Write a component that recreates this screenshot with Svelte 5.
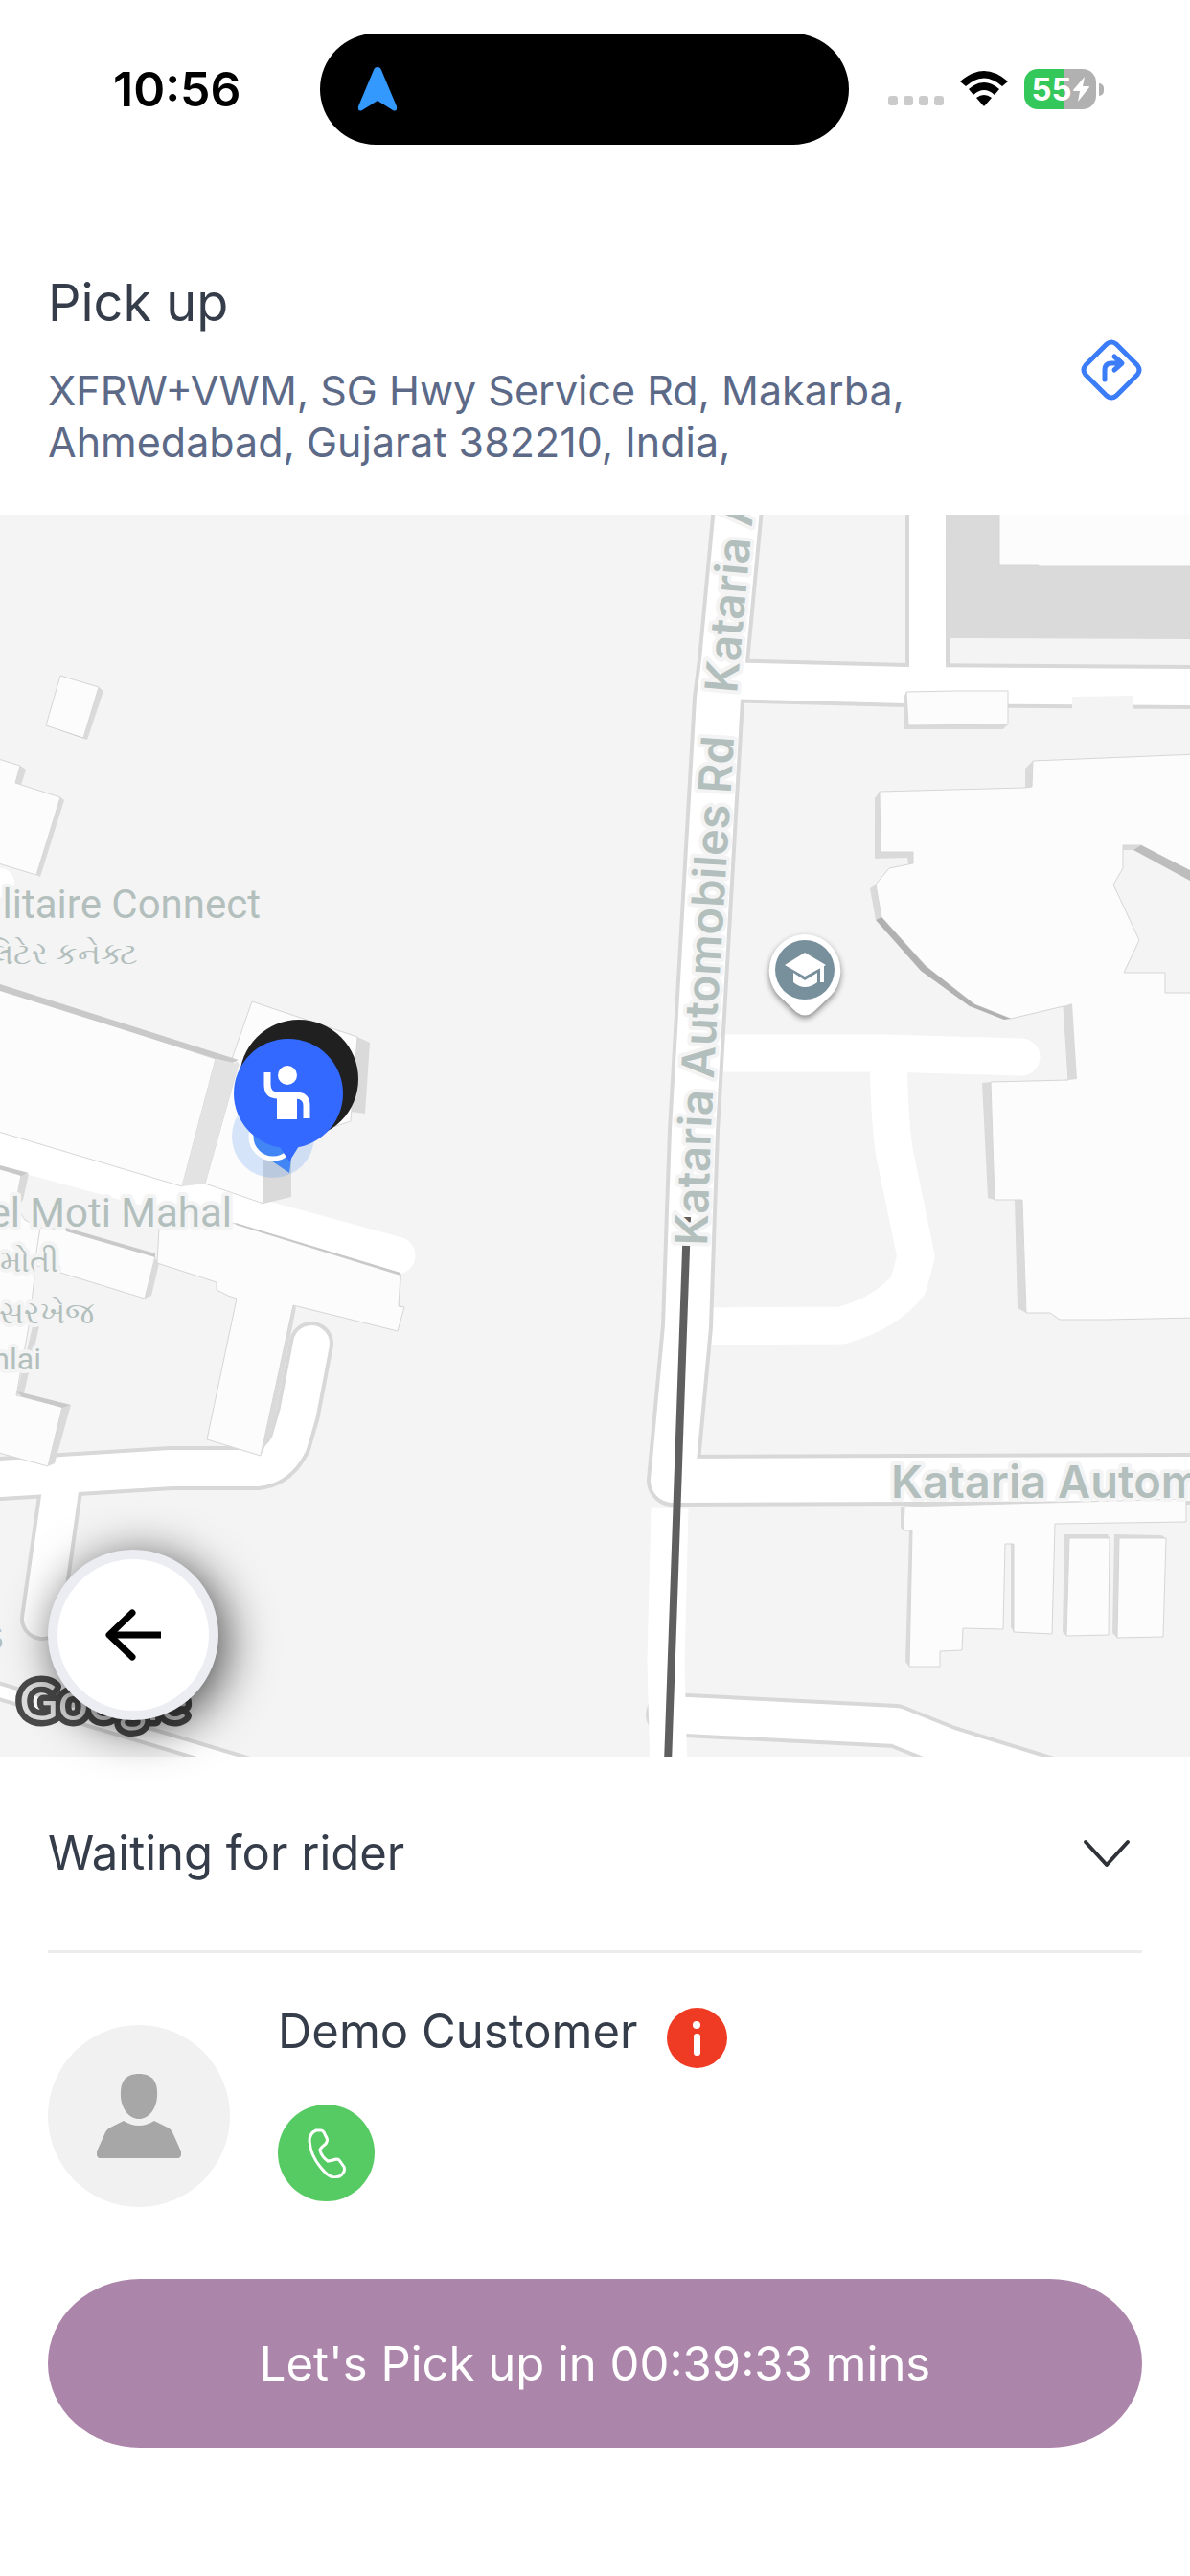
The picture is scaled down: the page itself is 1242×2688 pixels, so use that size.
<script lang="ts">
	const time = '10:56';
	const battery = 55;
	const rider = 'Demo Customer';
	const countdown = '00:39:33';

	// roads with a grey casing, drawn casing first so the junctions stay open
	const roads = [
		{ d: 'M770 530 L755 690 L750 729 L724 1180 L721 1264 L717 1384 L702 1545 L1260 1543', w: 54 },
		{ d: 'M752 710 L946 715 L1260 717', w: 46 },
		{ d: 'M968 500 V715', w: 46 },
		{ d: 'M-20 1545 L0 1543 L178 1532 L268 1532 Q290 1530 302 1506 L311 1475 L325 1402', w: 46 },
		{ d: 'M65 1541 L44 1689', w: 46 },
		{ d: 'M697 1789 L935 1801 L990 1823 L1100 1857', w: 46 },
		{ d: 'M-10 1762 L260 1843', w: 20 }
	];

	const lanes = [
		'M740 1099 H924 L1066 1103',
		'M927 1105 Q929 1180 934 1205 L956 1311 L948 1341 Q925 1370 879 1383 L730 1384',
		'M-20 1192 L414 1310'
	];

	const walls = [
		'M103 717 L108 721 L91 772 L87 770Z',
		'M21 799 L27 803 L22 819 L16 817Z M63 832 L67 835 L42 915 L38 913Z',
		'M373 1082 L386 1088 L381 1162 L366 1160Z',
		'M22 1226 L30 1225 L24 1252 L16 1262Z M34 1384 L41 1384 L25 1454 L17 1456Z',
		'M65 1468 L74 1466 L57 1527 L50 1530Z M162 1313 L166 1318 L158 1352 L151 1355Z',
		'M306 1362 L309 1364 L284 1493 L272 1519Z M418 1329 L419 1330 L417 1362 L422 1364 L415 1389Z',
		'M987 530 H1250 V667 L989 666Z',
		'M946 722 L944 726 V761 H1047 L1052 756Z',
		'M918 826 L913 833 V896 L947 895 L948 902 L953 901 V889 H919Z',
		'M1078 794 L1070 802 V822 L1077 822Z M914 923 L908 927 L914 960 L920 957Z',
		'M1025 1130 L1034 1129 L1038 1252 L1031 1250Z',
		'M1059 1252 H1067 L1071 1370 L1062 1365Z M1096 1370 H1105 V1377Z',
		'M1172 882 H1191 L1185 887 H1172Z',
		'M940 1572 H944 L943 1597 L940 1594Z M949 1597 H952 L949 1739 L945 1734Z',
		'M1055 1611 H1058 V1703 L1055 1698Z M1111 1601 L1156 1601 L1158 1605 H1116 L1113 1707 L1109 1703Z',
		'M1163 1601 L1212 1602 L1217 1605 H1168 L1166 1709 L1161 1704Z'
	];

	const roofs = [
		'M63 705 L103 717 L87 770 L48 757Z',
		'M-5 791 L21 799 L16 817 L63 832 L38 913 L-5 900Z',
		'M-5 1030 L225 1105 L190 1238 L-5 1180Z',
		'M263 1045 L373 1082 L366 1170 L275 1200 V1256 L214 1235 L249 1110 L242 1105Z',
		'M-5 1219 L22 1226 L16 1258 L26 1273 L42 1281 L30 1384 L17 1456 L65 1468 L50 1530 L-5 1515Z',
		'M42 1281 L69 1283 L162 1311 L151 1355 L63 1328 L36 1320Z',
		'M166 1281 L190 1262 L246 1277 L418 1329 L416 1363 L422 1364 L415 1389 L306 1362 L272 1519 L216 1502 L247 1355 L238 1352 L226 1346 V1338 L164 1318Z',
		'M1043 530 H1250 V591 L1085 591 L1083 590 H1043Z',
		'M946 722 L998 721 H1052 V756 L948 757Z',
		'M918 826 L1070 822 L1077 821 L1078 794 L1250 787 V914 L1191 882 H1172 V906 L1162 923 L1189 981 L1173 1015 H1216 V1036 H1250 V1375 L1154 1377 H1106 L1096 1370 H1071 L1067 1252 H1038 L1034 1129 L1115 1127 L1110 1050 L1055 1063 L1017 1048 L966 1008 L920 957 L914 923 L928 906 L953 901 V889 H919Z',
		'M944 1572 L1238 1564 V1588 L1101 1590 L1098 1705 L1058 1703 V1611 H1049 L1047 1700 L1005 1699 L1004 1722 L981 1723 V1739 H949 L952 1597 H943Z',
		'M1116 1605 H1158 L1157 1706 L1113 1707Z',
		'M1168 1605 L1217 1605 L1214 1708 L1166 1709Z'
	];

	const eaves = [
		'M0 1027 L249 1106 L242 1109 L226 1105 L0 1034Z',
		'M0 1216 L30 1224 L22 1227 L0 1220Z',
		'M69 1281 L162 1308 V1312 L69 1285Z',
		'M18 1452 L74 1466 L65 1469 L22 1457Z',
		'M246 1276 L418 1328 V1331 L246 1278Z',
		'M48 757 L91 772 L87 770Z'
	];
</script>

<div class="screen">
	<div class="status">
		<time class="clock">{time}</time>
		<div class="island">
			<svg width="42" height="46" viewBox="0 0 42 46" aria-hidden="true">
				<path d="M21 0 Q24 0 25 3 L41 41 Q42 47 37 45 L21 35 L5 45 Q0 47 1 41 L17 3 Q18 0 21 0Z" fill="#3399ff" />
			</svg>
		</div>
		<div class="indicators">
			<div class="dots"><i></i><i></i><i></i><i></i></div>
			<svg width="50" height="38" viewBox="0 0 50 38" aria-hidden="true">
				<path d="M0 11 Q25 -11 50 11 L44 16 Q25 -1 6 16Z" />
				<path d="M9 19 Q25 5 41 19 L36 25 Q25 15 14 25Z" />
				<path d="M17 28 Q25 22 33 28 L26 36 Q25 37 24 36Z" />
			</svg>
			<div class="battery">
				<div class="cell">
					<span>{battery}</span>
					<svg width="17" height="26" viewBox="0 0 17 26" aria-hidden="true">
						<path d="M12 0 L0 14 Q0 15 1 15 L7 15 L5 26 L17 11 Q17 10 16 10 L10 10Z" fill="#fff" />
					</svg>
				</div>
				<div class="nub"></div>
			</div>
		</div>
	</div>

	<header class="pickup">
		<div>
			<h1>Pick up</h1>
			<p>XFRW+VWM, SG Hwy Service Rd, Makarba, Ahmedabad, Gujarat 382210, India,</p>
		</div>
		<button class="plain" aria-label="Directions">
			<svg width="64" height="64" viewBox="0 0 64 64" fill="none" stroke="#3b7cf8" stroke-width="5" stroke-linecap="round" stroke-linejoin="round">
				<path d="M27 5 Q32 1 37 5 L59 27 Q63 32 59 37 L37 59 Q32 63 27 59 L5 37 Q1 32 5 27Z" />
				<path d="M25 42 V32 Q25 25 32 25 H42 M35 18 L43 25 L35 32" />
			</svg>
		</button>
	</header>

	<div class="map">
		<svg class="tiles" viewBox="0 537 1242 1296" role="img" aria-label="Map">
			<rect y="530" width="1242" height="1310" fill="#f4f4f4" />
			<g fill="none" stroke-linecap="round" stroke-linejoin="round">
				{#each lanes as lane}
					<path d={lane} stroke="#fff" stroke-width="39" />
				{/each}
				{#each roads as road}
					<path d={road.d} stroke="#d8d8d8" stroke-width={road.w} />
				{/each}
				{#each roads as road}
					<path d={road.d} stroke="#fff" stroke-width={road.w - 8} />
				{/each}
				<path d="M699 1574 L695 1735 L698 1850" stroke="#fff" stroke-width="39" stroke-linecap="butt" />
			</g>
			<circle cx="0" cy="921" r="15" fill="#fff" />
			<path d="M1119 727 L1183 726 V742 H1119Z" fill="#f4f4f4" />

			{#each walls as wall}
				<path d={wall} fill="#dadada" />
			{/each}
			{#each roofs as roof}
				<path d={roof} fill="#fcfcfc" stroke="#d6d6d6" />
			{/each}
			{#each eaves as eave}
				<path d={eave} fill="#c9c9c9" />
			{/each}
			<path d="M225 1105 L249 1110 L214 1235 L190 1238Z" fill="#e3e3e3" />
			<path d="M275 1200 H304 V1249 L275 1256Z M1110 1050 L1119 1047 L1124 1126 L1115 1127Z" fill="#dadada" />
			<path d="M914 960 L920 957 L966 1008 L1017 1048 L1055 1063 L1048 1064 L1012 1050 L961 1013Z" fill="#b1b1b1" />
			<path d="M1183 887 L1191 882 L1242 908 V919Z" fill="#bdbdbd" />

			<path d="M717 1270 L716 1304 L697 1840" fill="none" stroke="#5f5f5f" stroke-width="8" />

			<defs>
				<path id="road-north" d="M769 724 L789 500" />
				<path id="road-mid" d="M738 1300 L742 1177 L749 1050 L774 640" />
			</defs>
			<g class="label street">
				<text><textPath href="#road-north">Kataria A</textPath></text>
				<text><textPath href="#road-mid">Kataria Automobiles Rd</textPath></text>
				<text x="930" y="1563">Kataria Autom</text>
				<text x="4" y="1722" text-anchor="end">s</text>
			</g>
			<g class="label" text-anchor="end">
				<text x="272" y="958">litaire Connect</text>
				<text x="242" y="1280">el Moti Mahal</text>
				<g class="minor">
					<text x="144" y="1006">લિટેર કનેક્ટ</text>
					<text x="61" y="1327">મોતી</text>
					<text x="98" y="1381">સરખેજ</text>
					<text x="43" y="1429">nlai</text>
				</g>
			</g>

			<g class="poi">
				<path d="M840 975 A38 38 0 0 1 867 1039 L849 1056 Q840 1063 831 1056 L813 1039 A38 38 0 0 1 840 975Z" fill="#fff" />
				<circle cx="840" cy="1012" r="31" fill="#78909c" />
				<path d="M819 1007 L840 994 L862 1007 L840 1019Z M828 1015 L840 1023 L853 1015 V1025 Q840 1035 828 1025Z M856 1008 H860 V1025 H856Z" fill="#fff" />
			</g>

			<circle cx="285" cy="1186" r="43" fill="#4285f4" fill-opacity="0.2" />
			<path d="M283 1211 L302 1224 L305 1200Z" fill="#4285f4" />
			<circle cx="285" cy="1186" r="23" fill="#4285f4" stroke="#fff" stroke-width="5" />
			<circle cx="312" cy="1126" r="62" fill="#202020" />
			<path d="M285 1190 L292 1197 L302 1212 L312 1196 L320 1188Z" fill="#3369ff" />
			<circle cx="301" cy="1141" r="57" fill="#3369ff" />
			<circle cx="300" cy="1122" r="10" fill="#fff" />
			<path d="M279 1119 V1132 Q279 1143 290 1143 H309 Q320 1143 320 1154 V1167" fill="none" stroke="#fff" stroke-width="7" />
			<path d="M289 1140 H310 V1168 H289Z" fill="#fff" />

			<text class="google" x="20" y="1795">Google</text>
		</svg>
		<button class="back" aria-label="Back">
			<svg width="58" height="54" viewBox="0 0 58 54" fill="none" stroke="#000" stroke-width="7">
				<path d="M3 27 H58" />
				<path d="M28 4 L4 27 L28 50" stroke-linecap="round" stroke-linejoin="round" />
			</svg>
		</button>
	</div>

	<main class="sheet">
		<button class="plain state">
			<span>Waiting for rider</span>
			<svg width="50" height="30" viewBox="0 0 50 30" fill="none" stroke="#2f3237" stroke-width="4" stroke-linecap="round" stroke-linejoin="round">
				<path d="M3 3 L25 27 L47 3" />
			</svg>
		</button>

		<div class="rider">
			<div class="avatar">
				<svg width="88" height="88" viewBox="0 0 88 88" fill="#a7a7a7" aria-hidden="true">
					<path d="M44 0 C58 0 64 8 63 24 C62 37 54 47 44 47 C34 47 26 37 25 24 C24 8 30 0 44 0Z" />
					<path d="M28 49 Q44 59 60 49 L74 56 Q78 58 79 61 L88 81 Q89 88 84 88 H4 Q-1 88 0 81 L9 61 Q10 58 14 56Z" />
				</svg>
			</div>
			<div>
				<div class="name">
					<span>{rider}</span>
					<button class="info" aria-label="Rider info">
						<svg width="63" height="63" viewBox="0 0 63 63" fill="#fff">
							<circle cx="31" cy="18" r="4" />
							<rect x="28" y="27" width="7" height="23" rx="3" />
						</svg>
					</button>
				</div>
				<button class="call" aria-label="Call rider">
					<svg width="40" height="52" viewBox="0 0 40 52" fill="none" stroke="#fff" stroke-width="3" stroke-linejoin="round">
						<path d="M9 2 L14 2 Q16 2 17 4 L20 10 Q21 12 20 14 L19 16 Q14 20 13 22 Q14 29 21 34 Q23 34 30 32 Q32 32 33 33 L38 40 Q39 42 38 45 Q35 51 28 51 Q22 51 14 41 Q3 28 2 13 Q2 5 9 2Z" />
					</svg>
				</button>
			</div>
		</div>

		<button class="start">Let's Pick up in {countdown} mins</button>
	</main>
</div>

<style>
	:global(body) {
		margin: 0;
		background: #fff;
	}

	.screen {
		font-family: Inter, 'Liberation Sans', sans-serif;
		color: #363d4a;
	}

	button {
		font: inherit;
		color: inherit;
		border: 0;
		padding: 0;
		cursor: pointer;
	}
	.plain {
		background: none;
		display: flex;
	}
	svg {
		display: block;
		flex: none;
	}

	.status {
		display: grid;
		grid-template-columns: 334px 1fr 356px;
		align-items: center;
		padding-top: 35px;
	}
	.clock {
		padding-left: 118px;
		color: #000;
		font-size: 50px;
		font-weight: 600;
	}
	.island {
		display: flex;
		align-items: center;
		height: 116px;
		padding-left: 39px;
		border-radius: 58px;
		background: #000;
	}
	.indicators {
		display: flex;
		align-items: center;
		gap: 17px;
		padding-left: 41px;
	}
	.dots {
		display: flex;
		align-self: flex-end;
		gap: 6px;
		padding-bottom: 4px;
	}
	.dots i {
		width: 10px;
		height: 10px;
		border-radius: 3px;
		background: #cbcbcb;
	}
	.battery {
		display: flex;
		align-items: center;
		gap: 3px;
	}
	.cell {
		display: flex;
		align-items: center;
		justify-content: center;
		gap: 1px;
		width: 75px;
		height: 42px;
		border-radius: 14px;
		background: linear-gradient(90deg, #34c759 55%, #b1b1b1 55%);
		color: #fff;
		font-size: 33px;
		font-weight: 700;
	}
	.nub {
		width: 5px;
		height: 13px;
		border-radius: 0 6px 6px 0;
		background: #b1b1b1;
	}

	.pickup {
		display: flex;
		align-items: center;
		justify-content: space-between;
		padding: 132px 50px 49px;
	}
	h1 {
		margin: 0 0 31px;
		font-size: 54px;
		line-height: 66px;
		font-weight: 400;
	}
	p {
		max-width: 950px;
		margin: 0;
		color: #5c6a88;
		font-size: 43px;
		line-height: 54px;
	}

	.map {
		position: relative;
	}
	.tiles {
		width: 100%;
		height: auto;
	}
	.label {
		fill: #b3bfbd;
		stroke: #f4f4f4;
		stroke-width: 8px;
		stroke-linejoin: round;
		paint-order: stroke;
		font-family: Roboto, sans-serif;
		font-size: 42px;
	}
	.street {
		font-family: Inter, sans-serif;
		font-size: 47px;
		font-weight: 600;
	}
	.minor {
		font-size: 32px;
	}
	.poi {
		filter: drop-shadow(0 3px 3px rgb(0 0 0 / 0.45));
	}
	.google {
		fill: #dedede;
		stroke: #4a4a4a;
		stroke-width: 13px;
		stroke-linejoin: round;
		paint-order: stroke;
		font-family: Lato, sans-serif;
		font-size: 56px;
	}
	.back {
		position: absolute;
		left: 50px;
		bottom: 38px;
		display: grid;
		place-items: center;
		width: 178px;
		height: 178px;
		border: 10px solid #ecedf2;
		border-radius: 50%;
		background: #fff;
		box-shadow: 8px 8px 50px rgb(0 0 0 / 0.7);
	}

	.sheet {
		padding: 0 50px 132px;
	}
	.state {
		align-items: center;
		justify-content: space-between;
		width: 100%;
		padding: 70px 12px 70px 0;
		border-bottom: 3px solid #ececec;
		font-size: 49px;
		line-height: 62px;
	}
	.rider {
		display: flex;
		align-items: flex-end;
		gap: 50px;
		padding: 57px 0 75px;
	}
	.avatar {
		display: grid;
		place-items: center;
		width: 190px;
		height: 190px;
		border-radius: 50%;
		background: #f1f1f1;
	}
	.name {
		display: flex;
		align-items: flex-start;
		gap: 30px;
		font-size: 49px;
		line-height: 50px;
	}
	.info {
		border-radius: 50%;
		background: #ef3b24;
	}
	.call {
		display: grid;
		place-items: center;
		width: 101px;
		height: 101px;
		margin: 38px 0 6px;
		border-radius: 50%;
		background: #57cb63;
	}
	.start {
		width: 100%;
		height: 176px;
		border-radius: 96px / 88px;
		background: #ac85aa;
		color: #fff;
		font-size: 49px;
	}
</style>
